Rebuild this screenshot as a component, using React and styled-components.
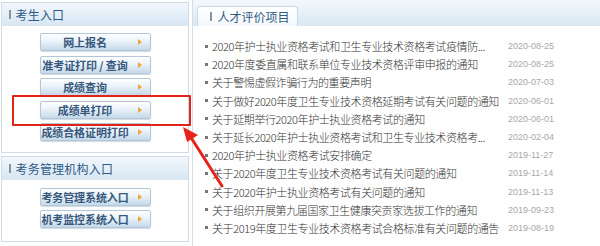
import React from "react";
import styled, { createGlobalStyle } from "styled-components";

const Global = createGlobalStyle`
  html, body { margin: 0; padding: 0; background: #fff; }
  body { font-family: "Noto Sans CJK SC", "Liberation Sans", sans-serif; }
  #root { width: 600px; height: 246px; overflow: hidden; }
`;

const Page = styled.div`
  position: relative;
  display: flex;
  width: 600px;
  height: 246px;
  gap: 3px;
  padding-left: 1px;
  box-sizing: border-box;
`;

const LeftCol = styled.div`
  width: 188px;
  display: flex;
  flex-direction: column;
  gap: 3px;
  padding-top: 2px;
`;

const Panel = styled.div`
  border: 1px solid #cfdbe6;
  background: #fff;
  height: ${(p) => p.$h}px;
  box-sizing: border-box;
`;

const PanelHead = styled.div`
  height: 22px;
  display: flex;
  align-items: center;
  padding-left: 7px;
  gap: 5px;
  background: linear-gradient(#f2f7fc, #d7e7f4);
  border-bottom: 1px solid #dbe6ef;
  font-size: 12px;
  color: #2f5a84;
  letter-spacing: 0.2px;
`;

const Bar = styled.span`
  display: inline-block;
  width: 1.5px;
  height: 9px;
  background: #8593a0;
`;

const BtnList = styled.div`
  display: flex;
  flex-direction: column;
  align-items: center;
  gap: ${(p) => p.$gap}px;
  padding-top: ${(p) => p.$top}px;
`;

const Btn = styled.div`
  position: relative;
  width: 111px;
  height: 18px;
  box-sizing: border-box;
  border: 1px solid #b3c7d8;
  border-radius: 2px;
  background: linear-gradient(#fdfeff 0%, #edf4fa 40%, #c5d9ea 100%);
  box-shadow: 0 1px 1px rgba(120, 150, 175, 0.35);
  display: flex;
  align-items: center;
  justify-content: center;
  padding-right: 20px;
  font-size: 11px;
  font-weight: 600;
  color: #36587c;
  white-space: nowrap;
  letter-spacing: -0.1px;
`;

const Tri = styled.span`
  position: absolute;
  right: 8px;
  top: 5px;
  width: 0;
  height: 0;
  border-top: 3.5px solid transparent;
  border-bottom: 3.5px solid transparent;
  border-left: 4px solid #f2a53a;
`;

const RightCol = styled.div`
  flex: 1;
  border-left: 1px solid #d3dee8;
  display: flex;
  flex-direction: column;
`;

const TabBar = styled.div`
  height: 25px;
  background: linear-gradient(#f3f8fc, #d9e8f4);
  display: flex;
  align-items: flex-end;
  padding-left: 4px;
  border-bottom: 1px solid #dde7ef;
`;

const Tab = styled.div`
  width: 101px;
  height: 20px;
  box-sizing: border-box;
  border: 1px solid #c9d8e5;
  border-bottom: none;
  border-radius: 4px 4px 0 0;
  background: linear-gradient(#ffffff, #f4f8fc);
  display: flex;
  align-items: center;
  padding-left: 12px;
  gap: 6px;
  font-size: 12px;
  color: #2f5a84;
  margin-bottom: -1px;
`;

const List = styled.ul`
  list-style: none;
  margin: 0;
  padding: 11px 0 0 12px;
`;

const Item = styled.li`
  display: grid;
  grid-template-columns: 7px 1fr 92px;
  align-items: center;
  height: 18.2px;
`;

const Dot = styled.span`
  width: 3px;
  height: 3px;
  background: #777;
`;

const Title = styled.span`
  font-size: 11px;
  font-weight: 300;
  color: #333;
  white-space: nowrap;
  overflow: hidden;
  letter-spacing: -0.4px;
`;

const DateText = styled.span`
  font-family: "Liberation Sans", sans-serif;
  font-size: 9px;
  color: #a8a8a8;
`;

const RedBox = styled.div`
  position: absolute;
  left: 12px;
  top: 95px;
  width: 179px;
  height: 31px;
  box-sizing: border-box;
  border: 2px solid #e2231a;
  border-radius: 1px;
`;

const Arrow = styled.svg`
  position: absolute;
  left: 176px;
  top: 122px;
`;

const items = [
  ["2020年护士执业资格考试和卫生专业技术资格考试疫情防...", "2020-08-25"],
  ["2020年度委直属和联系单位专业技术资格评审申报的通知", "2020-08-25"],
  ["关于警惕虚假诈骗行为的重要声明", "2020-07-03"],
  ["关于做好2020年度卫生专业技术资格延期考试有关问题的通知", "2020-06-01"],
  ["关于延期举行2020年护士执业资格考试的通知", "2020-06-01"],
  ["关于延长2020年护士执业资格考试和卫生专业技术资格考...", "2020-02-04"],
  ["2020年护士执业资格考试安排确定", "2019-11-27"],
  ["关于2020年度卫生专业技术资格考试有关问题的通知", "2019-11-14"],
  ["关于2020年护士执业资格考试有关问题的通知", "2019-11-13"],
  ["关于组织开展第九届国家卫生健康突贡家选拔工作的通知", "2019-09-23"],
  ["关于2019年度卫生专业技术资格考试合格标准有关问题的通告", "2019-08-19"],
];

const exam = ["网上报名", "准考证打印 / 查询", "成绩查询", "成绩单打印", "成绩合格证明打印"];
const org = ["考务管理系统入口", "机考监控系统入口"];

export default function App() {
  return (
    <>
      <Global />
      <Page>
        <LeftCol>
          <Panel $h={151}>
            <PanelHead>
              <Bar />
              考生入口
            </PanelHead>
            <BtnList $top={7} $gap={4.5}>
              {exam.map((t) => (
                <Btn key={t}>
                  {t}
                  <Tri />
                </Btn>
              ))}
            </BtnList>
          </Panel>
          <Panel $h={86}>
            <PanelHead>
              <Bar />
              考务管理机构入口
            </PanelHead>
            <BtnList $top={8} $gap={4}>
              {org.map((t) => (
                <Btn key={t}>
                  {t}
                  <Tri />
                </Btn>
              ))}
            </BtnList>
          </Panel>
        </LeftCol>
        <RightCol>
          <TabBar>
            <Tab>
              <Bar />
              人才评价项目
            </Tab>
          </TabBar>
          <List>
            {items.map(([t, d]) => (
              <Item key={t}>
                <Dot />
                <Title>{t}</Title>
                <DateText>{d}</DateText>
              </Item>
            ))}
          </List>
        </RightCol>
        <RedBox />
        <Arrow width="52" height="70" viewBox="0 0 52 70">
          <path d="M46 64 L14 14" stroke="#e8231c" strokeWidth="3" strokeLinecap="round" />
          <polygon points="7,5 22,13 11,20" fill="#e8231c" />
        </Arrow>
      </Page>
    </>
  );
}
